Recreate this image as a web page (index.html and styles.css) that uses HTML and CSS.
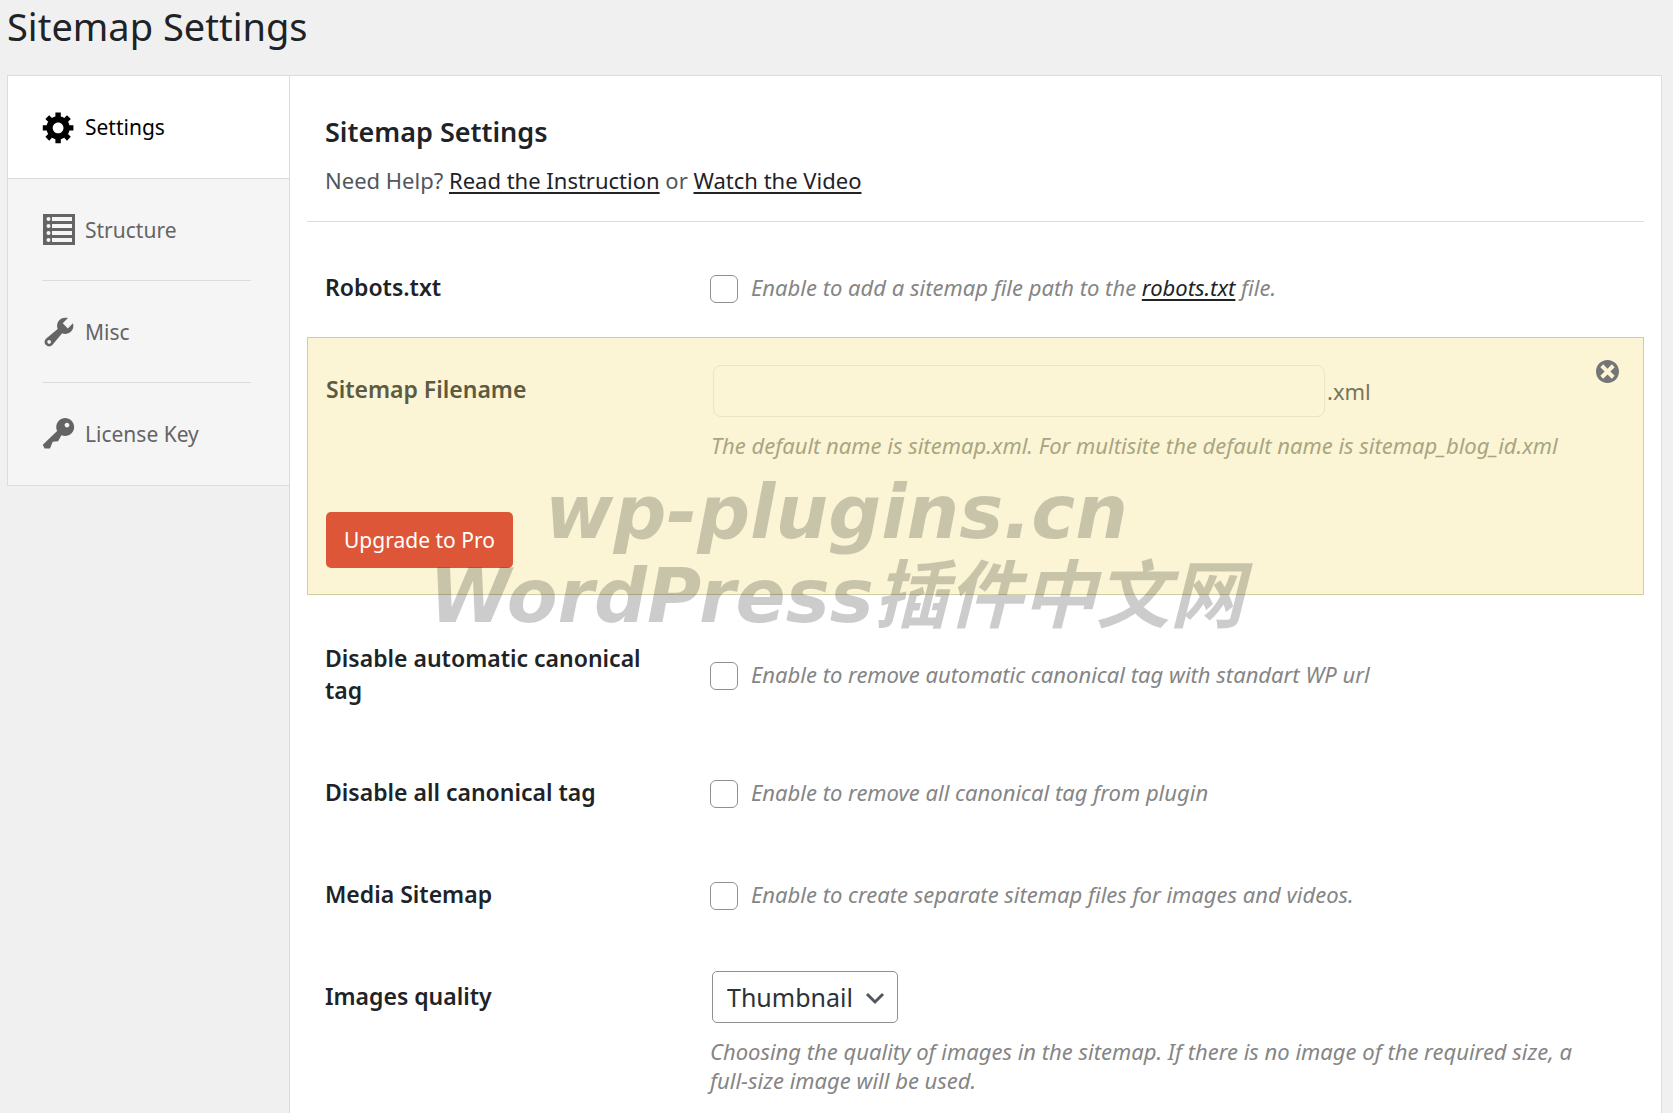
FILE: index.html
```html
<!DOCTYPE html>
<html lang="en">
<head>
    <meta charset="UTF-8">
    <meta name="viewport" content="width=device-width, initial-scale=1.0">
    <title>Sitemap Settings</title>
    <link rel="stylesheet" href="styles.css">
</head>
<body>

    <h1 class="page-title">Sitemap Settings</h1>

    <div class="wrap">
        <nav class="tabs">
            <a href="#settings" class="tab active">
                <svg class="tab-icon" viewBox="0 0 20 20"><path d="M18 12h-2.18c-.17.7-.44 1.35-.81 1.93l1.54 1.54-2.1 2.1-1.54-1.54c-.58.36-1.23.63-1.91.79V19H8v-2.18c-.68-.16-1.33-.43-1.91-.79l-1.54 1.54-2.12-2.12 1.54-1.54c-.36-.58-.63-1.23-.79-1.91H1V9.03h2.17c.16-.7.44-1.35.8-1.94L2.43 5.55l2.1-2.1 1.54 1.54c.58-.37 1.24-.64 1.93-.81V2h3v2.18c.68.16 1.33.43 1.91.79l1.54-1.54 2.12 2.12-1.54 1.54c.36.59.64 1.24.8 1.94H18V12zm-8.5 1.5c1.66 0 3-1.34 3-3s-1.34-3-3-3-3 1.34-3 3 1.34 3 3 3z"/></svg>
                <span>Settings</span>
            </a>
            <a href="#structure" class="tab">
                <svg class="tab-icon" viewBox="0 0 36 36"><path fill-rule="evenodd" d="M2 2h32v31H2zM11 5v4h20V5zM11 12v4h20v-4zM11 19v4h20v-4zM11 26v4h20v-4z"/><g fill="#f5f5f5"><circle cx="7.5" cy="7" r="2"/><circle cx="7.5" cy="14" r="2"/><circle cx="7.5" cy="21" r="2"/><circle cx="7.5" cy="28" r="2"/></g></svg>
                <span>Structure</span>
            </a>
            <a href="#misc" class="tab">
                <svg class="tab-icon" viewBox="0 0 20 20"><path d="M16.68 9.77c-1.34 1.34-3.3 1.67-4.95.99l-5.41 6.52c-.99.99-2.59.99-3.58 0s-.99-2.59 0-3.57l6.52-5.42c-.68-1.65-.35-3.61.99-4.95 1.28-1.28 3.12-1.62 4.72-1.06l-2.89 2.89 2.82 2.82 2.86-2.87c.53 1.58.18 3.39-1.08 4.65zM3.81 16.21c.4.39 1.04.39 1.43 0 .4-.4.4-1.04 0-1.43-.39-.4-1.03-.4-1.43 0-.39.39-.39 1.03 0 1.43z"/></svg>
                <span>Misc</span>
            </a>
            <a href="#license" class="tab">
                <svg class="tab-icon" viewBox="0 0 20 20"><path d="M16.95 2.58c1.96 1.95 1.96 5.12 0 7.07-1.51 1.51-3.75 1.84-5.59 1.01l-1.87 3.31-2.99.31L5 18H2l-1-2 7.95-7.69c-.92-1.87-.62-4.18.93-5.73 1.95-1.96 5.12-1.96 7.07 0zm-2.51 3.79c.74 0 1.33-.6 1.33-1.34 0-.73-.59-1.33-1.33-1.33-.73 0-1.33.6-1.33 1.33 0 .74.6 1.34 1.33 1.34z"/></svg>
                <span>License Key</span>
            </a>
        </nav>

        <main class="panel">
            <header class="panel-header">
                <h2>Sitemap Settings</h2>
                <p>Need Help? <a href="#instruction">Read the Instruction</a> or <a href="#video">Watch the Video</a></p>
            </header>

            <form class="settings-form">
                <div class="row">
                    <label class="row-label" for="robots">Robots.txt</label>
                    <div class="row-field check-field">
                        <input type="checkbox" id="robots">
                        <span class="hint">Enable to add a sitemap file path to the <a href="#robots">robots.txt</a> file.</span>
                    </div>
                </div>

                <!-- Pro block -->
                <div class="pro-block">
                    <div class="pro-row">
                        <label class="row-label" for="filename">Sitemap Filename</label>
                        <div class="row-field">
                            <div class="filename">
                                <input type="text" id="filename" disabled>
                                <span>.xml</span>
                            </div>
                            <p class="hint">The default name is sitemap.xml. For multisite the default name is sitemap_blog_id.xml</p>
                        </div>
                    </div>
                    <button type="button" class="upgrade-btn">Upgrade to Pro</button>
                    <button type="button" class="close-btn" aria-label="Close">
                        <svg viewBox="2 2 16 16"><path d="M10 2c4.42 0 8 3.58 8 8s-3.58 8-8 8-8-3.58-8-8 3.58-8 8-8zm5 11l-3-3 3-3-2-2-3 3-3-3-2 2 3 3-3 3 2 2 3-3 3 3z"/></svg>
                    </button>
                </div>

                <div class="row">
                    <label class="row-label" for="canonical">Disable automatic canonical tag</label>
                    <div class="row-field check-field">
                        <input type="checkbox" id="canonical">
                        <span class="hint">Enable to remove automatic canonical tag with standart WP url</span>
                    </div>
                </div>
                <div class="row">
                    <label class="row-label" for="canonical-all">Disable all canonical tag</label>
                    <div class="row-field check-field">
                        <input type="checkbox" id="canonical-all">
                        <span class="hint">Enable to remove all canonical tag from plugin</span>
                    </div>
                </div>
                <div class="row">
                    <label class="row-label" for="media">Media Sitemap</label>
                    <div class="row-field check-field">
                        <input type="checkbox" id="media">
                        <span class="hint">Enable to create separate sitemap files for images and videos.</span>
                    </div>
                </div>
                <div class="row row-tall">
                    <label class="row-label" for="quality">Images quality</label>
                    <div class="row-field">
                        <div class="select-box">
                            <select id="quality">
                                <option>Thumbnail</option>
                                <option>Medium</option>
                                <option>Large</option>
                            </select>
                            <svg class="select-arrow" viewBox="0 0 20 20"><path d="M2 6l8 8 8-8" fill="none" stroke="#50575e" stroke-width="3"/></svg>
                        </div>
                        <p class="hint">Choosing the quality of images in the sitemap. If there is no image of the required size, a full-size image will be used.</p>
                    </div>
                </div>
            </form>
        </main>
    </div>

    <div class="watermark">
        <p>wp-plugins.cn</p>
        <p>WordPress插件中文网</p>
    </div>

</body>
</html>
```
FILE: styles.css
```css
* {
    margin: 0;
    padding: 0;
    box-sizing: border-box;
}

html,
body {
    height: 100%;
}

body {
    display: flex;
    flex-direction: column;
    padding: 0 11px 0 7px;
    overflow: hidden;
    background: #f0f0f0;
    color: #1d2327;
    font-family: "Noto Sans", sans-serif;
    font-size: 21px;
    line-height: 32px;
}

.page-title {
    padding: 2px 0 25px;
    font-size: 38px;
    font-weight: 400;
    line-height: 48px;
}

.wrap {
    display: flex;
    flex: 1;
    align-items: flex-start;
}

/* Tabs */
.tabs {
    width: 282px;
    flex-shrink: 0;
    border: 1px solid #dcdcde;
    border-right: none;
    background: #f5f5f5;
}

.tab {
    display: flex;
    align-items: center;
    gap: 8px;
    height: 102px;
    padding-left: 33px;
    position: relative;
    color: #646466;
    text-decoration: none;
}

.tab.active {
    height: 103px;
    background: #fff;
    border-bottom: 1px solid #dcdcde;
    color: #000;
}

.tab:not(.active):not(:last-child)::after {
    content: "";
    position: absolute;
    left: 34px;
    right: 38px;
    bottom: 0;
    border-bottom: 1px solid #dcdcde;
}

.tab-icon {
    width: 36px;
    height: 36px;
    fill: currentColor;
}

/* Panel */
.panel {
    flex: 1;
    align-self: stretch;
    padding: 0 17px;
    border: 1px solid #dcdcde;
    border-bottom: none;
    background: #fff;
}

.panel-header {
    padding: 36px 18px 25px;
    border-bottom: 1px solid #dcdcde;
    margin-bottom: 15px;
    color: #50575e;
    font-size: 22px;
}

.panel-header h2 {
    margin-bottom: 12px;
    color: #1d2327;
    font-size: 27px;
    font-weight: 600;
    line-height: 40px;
}

.panel-header a,
.hint a {
    color: #1d2327;
    text-decoration-thickness: 2px;
    text-underline-offset: 3px;
}

/* Form rows */
.row {
    display: flex;
    align-items: center;
    padding: 34px 18px;
}

.row + .row {
    margin-top: 2px;
}

.row-label {
    width: 385px;
    flex-shrink: 0;
    padding-right: 65px;
    font-size: 23px;
    font-weight: 600;
}

.row-field {
    flex: 1;
}

.check-field {
    display: flex;
    align-items: center;
    gap: 13px;
}

.check-field input {
    appearance: none;
    width: 28px;
    height: 28px;
    flex-shrink: 0;
    margin-top: 3px;
    border: 1px solid #8c8f94;
    border-radius: 6px;
    background: #fff;
}

.hint {
    color: #858585;
    font-size: 22px;
    font-style: italic;
    line-height: 29px;
}

p.hint {
    margin-top: 14px;
}

.row-tall {
    align-items: flex-start;
    padding-top: 25px;
}

.row-tall .row-label {
    padding-top: 9px;
}

.row-tall .row-field {
    padding-right: 40px;
}

.select-box {
    display: inline-block;
    position: relative;
    margin-left: 2px;
    vertical-align: top;
}

.select-box select {
    appearance: none;
    height: 52px;
    padding: 0 44px 0 14px;
    border: 1px solid #8c8f94;
    border-radius: 5px;
    background: #fff;
    color: #2c3338;
    font-family: inherit;
    font-size: 25px;
}

.select-arrow {
    position: absolute;
    top: 17px;
    right: 13px;
    width: 20px;
    height: 20px;
    pointer-events: none;
}

/* Pro block */
.pro-block {
    position: relative;
    margin-bottom: 13px;
    padding: 27px 18px 26px;
    border: 1px solid #cfcfa4;
    background: #fbf5d5;
}

.pro-row {
    display: flex;
    align-items: flex-start;
    margin-bottom: 52px;
}

.pro-row .row-label {
    padding-top: 8px;
    color: #5c5b41;
}

.pro-row .hint {
    color: #a9a582;
}

.filename {
    display: flex;
    align-items: center;
    gap: 2px;
    margin-left: 2px;
    color: #78765a;
    font-size: 22px;
}

.filename input {
    flex: 0 1 612px;
    height: 52px;
    border: 1px solid #e9e4c4;
    border-radius: 8px;
    background: transparent;
}

.upgrade-btn {
    height: 56px;
    padding: 0 18px;
    border: none;
    border-radius: 5px;
    background: #dd5637;
    color: #fff;
    font-family: inherit;
    font-size: 21px;
    cursor: pointer;
}

.close-btn {
    position: absolute;
    top: 22px;
    right: 24px;
    width: 23px;
    height: 23px;
    border: none;
    background: none;
    cursor: pointer;
}

.close-btn svg {
    display: block;
    fill: #757575;
}

/* Watermark */
.watermark {
    position: fixed;
    inset: 0;
    display: flex;
    flex-direction: column;
    align-items: center;
    justify-content: center;
    padding-bottom: 6px;
    color: rgba(0, 0, 0, 0.2);
    font-family: "DejaVu Sans", "Noto Sans CJK SC", sans-serif;
    font-size: 74px;
    font-style: italic;
    font-weight: 700;
    line-height: 84px;
    pointer-events: none;
}
```
